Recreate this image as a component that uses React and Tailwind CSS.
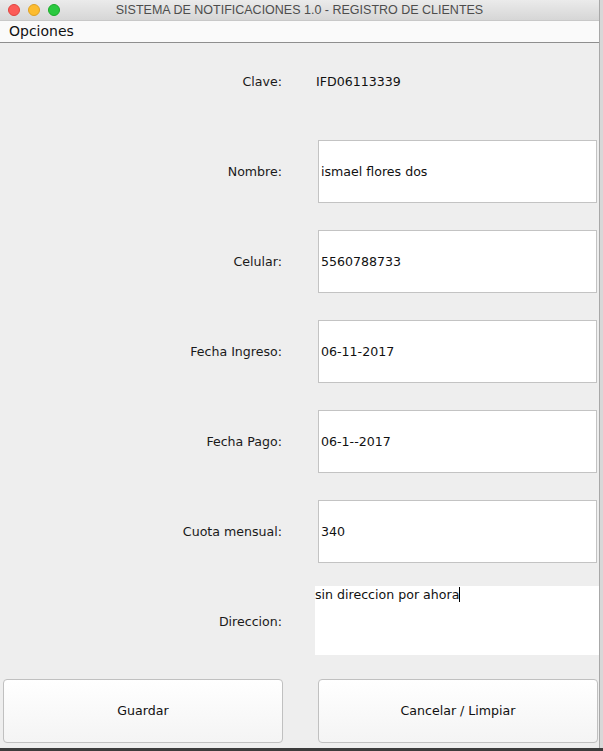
import React from "react";

const labelCls = "w-[282px] shrink-0 text-right text-[12.6px] text-[#1a1a1a] pt-[2px]";

function Row({ label, children }) {
  return (
    <div className="flex h-[63px] items-center">
      <div className={labelCls}>{label}</div>
      <div className="ml-[36px] flex-1 self-stretch flex items-center">{children}</div>
    </div>
  );
}

function Field({ value }) {
  return (
    <div className="h-full w-[279px] border border-[#c3c3c3] bg-white flex items-center pl-[2px] pt-[2px] text-[12.6px] text-[#111]">
      {value}
    </div>
  );
}

export default function App() {
  return (
    <div className="w-[603px] h-[751px] overflow-hidden bg-[#d4d4d4] flex flex-col" style={{ fontFamily: '"DejaVu Sans", "Noto Sans", sans-serif' }}>
      <div className="flex h-[748px]">
        <div className="w-[599px] flex flex-col bg-[#eeeeee]">
          {/* title bar */}
          <div className="relative h-[21px] flex items-center justify-center bg-gradient-to-b from-[#ebebeb] to-[#d6d6d6] border-b border-[#c8c8c8]">
            <div className="absolute left-[8px] top-[4px] flex gap-[8px]">
              <span className="w-[12px] h-[12px] rounded-full bg-[#fc5b57] border border-[#e0443e]" />
              <span className="w-[12px] h-[12px] rounded-full bg-[#fdbc2f] border border-[#dea123]" />
              <span className="w-[12px] h-[12px] rounded-full bg-[#2ac940] border border-[#1aab29]" />
            </div>
            <span className="text-[12.5px] text-[#4d4d4d]" style={{ fontFamily: '"Liberation Sans", Arial, sans-serif' }}>
              SISTEMA DE NOTIFICACIONES 1.0 - REGISTRO DE CLIENTES
            </span>
          </div>
          {/* menu bar */}
          <div className="h-[22px] bg-[#fafafa] border-b border-[#8e8e8e] flex items-center pl-[9px] text-[14px] text-[#111]">
            Opciones
          </div>
          {/* form */}
          <div className="flex flex-col gap-[27px] pt-[7px]">
            <div className="flex h-[63px] items-center">
              <div className={labelCls}>Clave:</div>
              <div className="ml-[34px] pt-[2px] text-[12.6px] text-[#111]">IFD06113339</div>
            </div>
            <Row label="Nombre:"><Field value="ismael flores dos" /></Row>
            <Row label="Celular:"><Field value="5560788733" /></Row>
            <Row label="Fecha Ingreso:"><Field value="06-11-2017" /></Row>
            <Row label="Fecha Pago:"><Field value="06-1--2017" /></Row>
            <Row label="Cuota mensual:"><Field value="340" /></Row>
            <div className="flex h-[63px] items-center">
              <div className={labelCls}>Direccion:</div>
              <div className="ml-[33px] h-[69px] -mt-[2px] flex-1 bg-white text-[12.6px] text-[#111]">
                sin direccion por ahora<span className="inline-block w-px h-[15px] bg-black align-[-3px]" />
              </div>
            </div>
          </div>
          {/* buttons */}
          <div className="flex mt-[26px] pl-[3px] gap-[35px]">
            <button className="w-[280px] h-[64px] rounded-[4px] border border-[#c0c0c0] bg-gradient-to-b from-white to-[#f4f4f4] text-[12.6px] text-[#111] pt-[1px]">
              Guardar
            </button>
            <button className="w-[280px] h-[64px] rounded-[4px] border border-[#c0c0c0] bg-gradient-to-b from-white to-[#f4f4f4] text-[12.6px] text-[#111] pt-[1px]">
              Cancelar / Limpiar
            </button>
          </div>
        </div>
        <div className="w-px bg-[#a8a8a8]" />
        <div className="flex-1 bg-[#d8d8d8]" />
      </div>
      <div className="flex-1 bg-[#3c3c3c]" />
    </div>
  );
}
